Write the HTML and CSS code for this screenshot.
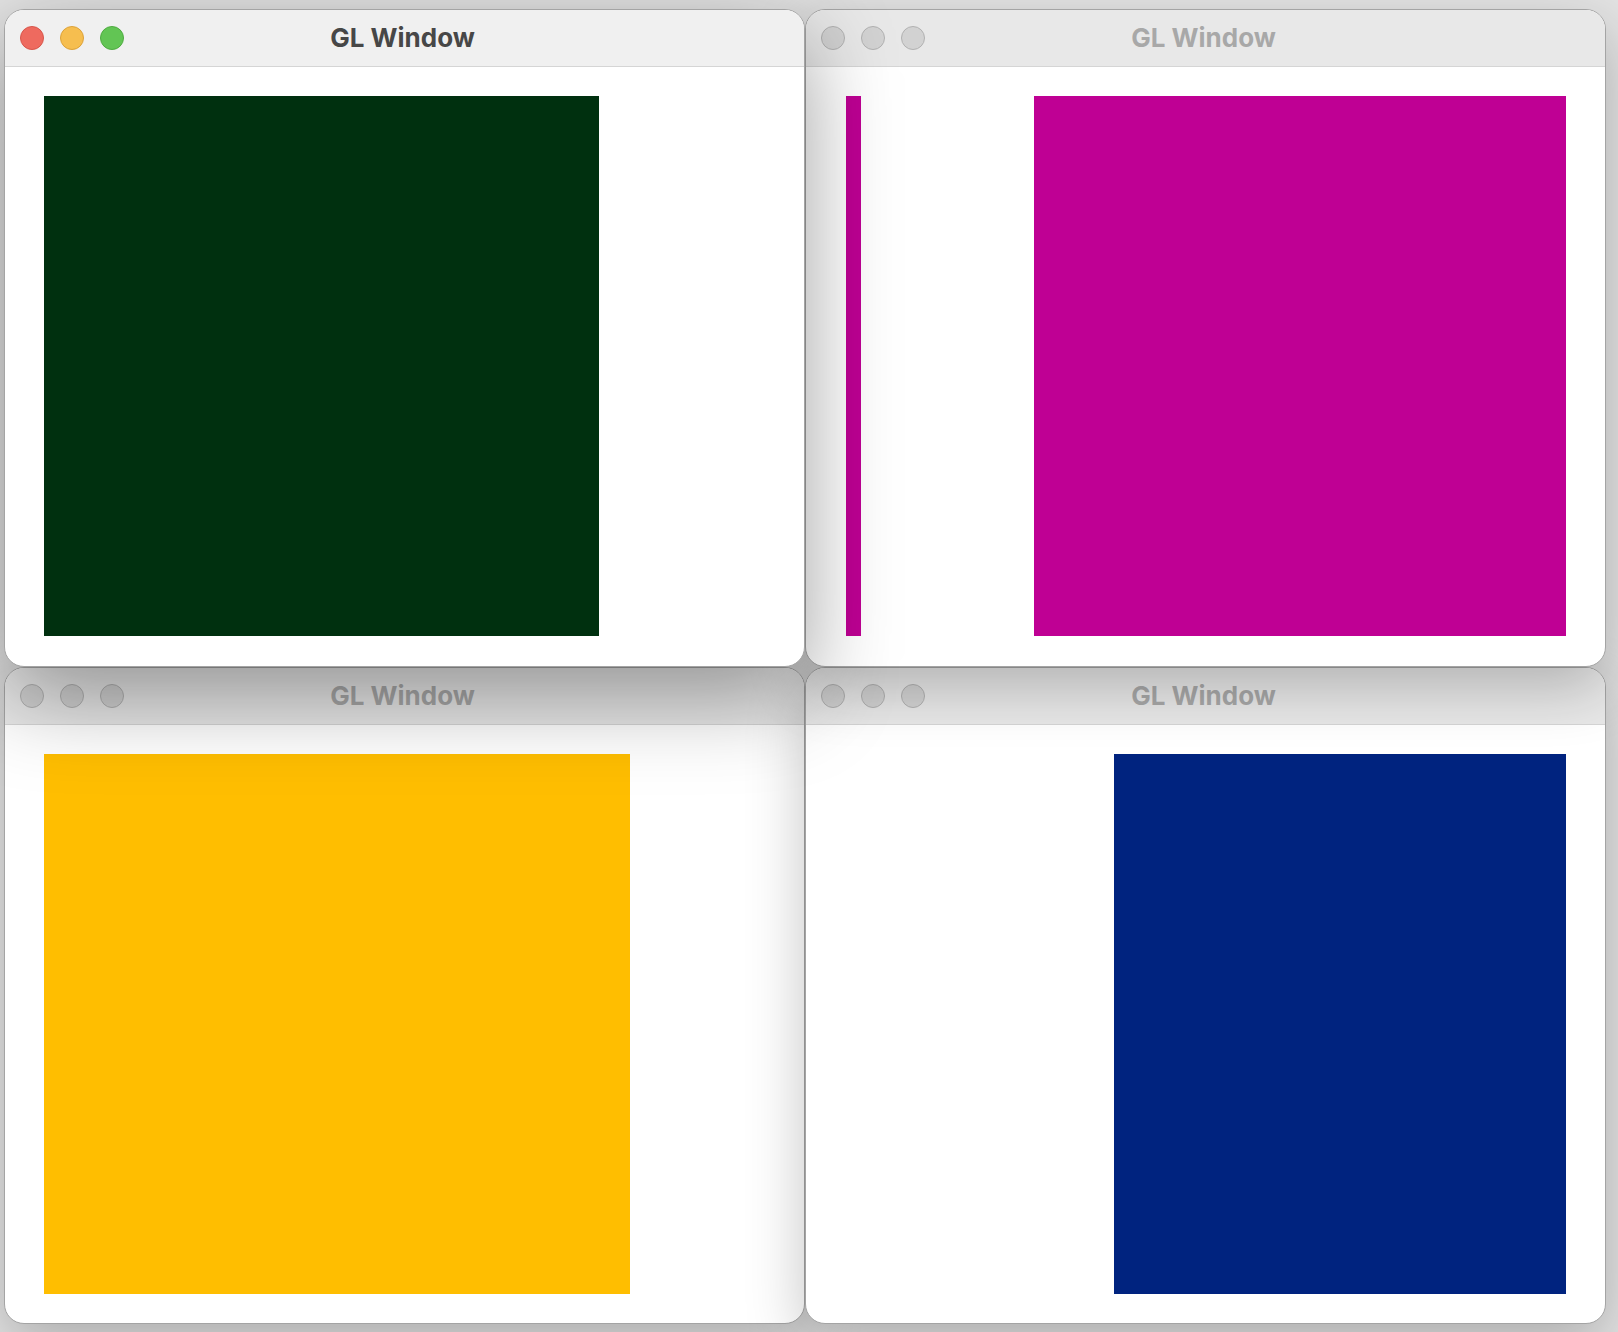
FILE: index.html
```html
<!DOCTYPE html>
<html lang="en">
<head>
<meta charset="utf-8">
<title>GL Windows</title>
<link rel="stylesheet" href="styles.css">
</head>
<body>
<div class="desktop">
  <section class="window w1 active">
    <header class="titlebar">
      <div class="lights">
        <span class="light red"></span>
        <span class="light yellow"></span>
        <span class="light green"></span>
      </div>
      <h1 class="title">GL Window</h1>
    </header>
    <div class="viewport">
      <div class="rect rect-green"></div>
    </div>
  </section>

  <section class="window w2">
    <header class="titlebar">
      <div class="lights">
        <span class="light"></span>
        <span class="light"></span>
        <span class="light"></span>
      </div>
      <h1 class="title">GL Window</h1>
    </header>
    <div class="viewport split">
      <div class="rect rect-magenta-thin"></div>
      <div class="rect rect-magenta"></div>
    </div>
  </section>

  <section class="window w3">
    <header class="titlebar">
      <div class="lights">
        <span class="light"></span>
        <span class="light"></span>
        <span class="light"></span>
      </div>
      <h1 class="title">GL Window</h1>
    </header>
    <div class="viewport">
      <div class="rect rect-yellow"></div>
    </div>
  </section>

  <section class="window w4">
    <header class="titlebar">
      <div class="lights">
        <span class="light"></span>
        <span class="light"></span>
        <span class="light"></span>
      </div>
      <h1 class="title">GL Window</h1>
    </header>
    <div class="viewport end">
      <div class="rect rect-navy"></div>
    </div>
  </section>
</div>
</body>
</html>
```

FILE: styles.css
```css
html, body {
  margin: 0;
  padding: 0;
}

body {
  width: 1618px;
  height: 1332px;
  overflow: hidden;
  background: #e3e3e3;
  font-family: Inter, "Noto Sans", "Liberation Sans", sans-serif;
}

.desktop {
  display: grid;
  grid-template-columns: 801px 801px;
  grid-template-rows: 658px 657px;
  padding: 9px 0 0 4px;
}

.window {
  position: relative;
  display: flex;
  flex-direction: column;
  background: #ffffff;
  border: 1px solid #a4a4a4;
  border-radius: 20px;
  overflow: hidden;
  box-shadow: 0 20px 60px rgba(0, 0, 0, 0.24);
}

.w1 {
  z-index: 4;
  box-shadow: 0 28px 90px rgba(0, 0, 0, 0.38);
}
.w2 { z-index: 3; }
.w4 { z-index: 2; }
.w3 { z-index: 1; }

.titlebar {
  position: relative;
  flex: 0 0 56px;
  display: flex;
  align-items: center;
  justify-content: center;
  background: #e8e8e8;
  border-bottom: 1px solid #d5d5d5;
}

.active .titlebar {
  background: #f0f0f0;
}

.lights {
  position: absolute;
  left: 15px;
  top: 16px;
  display: flex;
  gap: 16px;
}

.light {
  width: 22px;
  height: 22px;
  border-radius: 50%;
  background: #d2d2d2;
  border: 1px solid #b1b1b1;
}

.red { background: #ee6a5f; border-color: #d7564b; }
.yellow { background: #f6be4f; border-color: #dca23a; }
.green { background: #62c554; border-color: #4fab41; }

.title {
  margin: 0;
  font-size: 26px;
  font-weight: 700;
  color: #a8a8a8;
  letter-spacing: 0;
  line-height: 1;
  transform: translateX(-2px);
}

.active .title {
  color: #474747;
}

.viewport {
  flex: 1;
  display: flex;
  align-items: flex-start;
  padding: 29px 39px 0 39px;
}

.viewport.split {
  justify-content: space-between;
  padding-left: 40px;
}

.viewport.end {
  justify-content: flex-end;
}

.rect {
  height: 540px;
}

.rect-green {
  width: 555px;
  background: #00300f;
}

.rect-magenta-thin {
  width: 15px;
  background: #bf0094;
}

.rect-magenta {
  width: 532px;
  background: #bf0094;
}

.rect-yellow {
  width: 586px;
  background: #ffbe00;
}

.rect-navy {
  width: 452px;
  background: #00237f;
}
```
